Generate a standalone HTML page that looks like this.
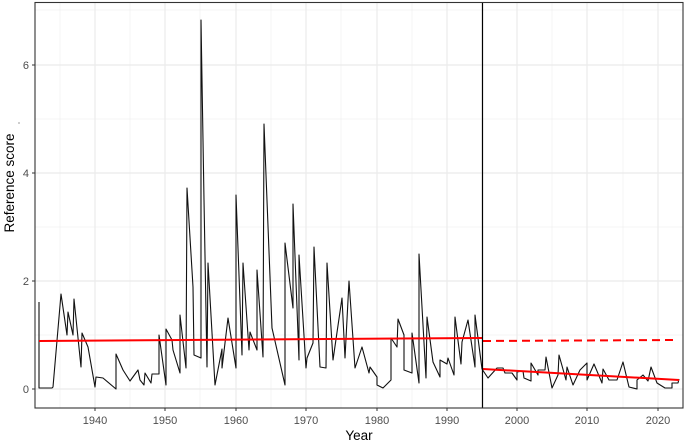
<!DOCTYPE html>
<html><head><meta charset="utf-8"><style>
html,body{margin:0;padding:0;background:#fff;}
svg{display:block;font-family:"Liberation Sans",sans-serif;}
</style></head><body>
<svg width="685" height="443" viewBox="0 0 685 443">
<rect width="685" height="443" fill="#fff"/>
<g stroke="#f0f0f0" stroke-width="0.7">
<line x1="35" x2="683" y1="335" y2="335"/><line x1="35" x2="683" y1="227" y2="227"/><line x1="35" x2="683" y1="119" y2="119"/><line x1="35" x2="683" y1="10" y2="10"/>
<line y1="3" y2="408" x1="60" x2="60"/><line y1="3" y2="408" x1="130" x2="130"/><line y1="3" y2="408" x1="200" x2="200"/><line y1="3" y2="408" x1="271" x2="271"/><line y1="3" y2="408" x1="341" x2="341"/><line y1="3" y2="408" x1="412" x2="412"/><line y1="3" y2="408" x1="482" x2="482"/><line y1="3" y2="408" x1="552" x2="552"/><line y1="3" y2="408" x1="623" x2="623"/>
</g>
<g stroke="#ebebeb" stroke-width="1.2">
<line x1="35" x2="683" y1="389" y2="389"/><line x1="35" x2="683" y1="281" y2="281"/><line x1="35" x2="683" y1="173" y2="173"/><line x1="35" x2="683" y1="65" y2="65"/>
<line y1="3" y2="408" x1="95" x2="95"/><line y1="3" y2="408" x1="165" x2="165"/><line y1="3" y2="408" x1="236" x2="236"/><line y1="3" y2="408" x1="306" x2="306"/><line y1="3" y2="408" x1="377" x2="377"/><line y1="3" y2="408" x1="447" x2="447"/><line y1="3" y2="408" x1="517" x2="517"/><line y1="3" y2="408" x1="587" x2="587"/><line y1="3" y2="408" x1="658" x2="658"/>
</g>
<polyline fill="none" stroke="#111" stroke-width="1.1" stroke-linejoin="round" points="39,302 39,388 52,388 53,387 61,294 67,335 68,312 73,335 74,299 81,367 82,333 88,347 95,387 96,377 103,378 116,389 116,354 123,370 130,381 138,370 140,380 144,385 145,373 151,383 152,374 159,374 159,335 166,385 166,329 172,340 173,350 180,373 180,315 186,368 187,188 193,287 194,355 201,358 201,20 204,200 207,367 208,263 215,385 222,349 222,368 228,318 236,368 236,195 242,355 243,263 249,350 250,332 257,350 257,270 263,357 264,124 272,328 285,385 285,243 293,308 293,204 299,360 299,255 306,368 307,358 313,343 314,247 320,367 326,368 327,263 333,360 342,298 345,358 349,281 355,368 362,347 369,373 370,367 377,377 377,385 383,388 391,380 391,338 397,347 398,319 404,335 404,370 412,373 412,333 419,383 419,254 426,378 427,317 433,362 440,377 440,360 447,364 448,358 454,375 455,317 461,364 462,342 468,320 475,367 475,315 482,369 488,378 497,368 503,368 505,373 512,373 517,380 517,372 523,371 524,378 531,381 531,363 538,375 538,370 545,370 546,357 552,388 558,375 559,355 566,380 567,367 573,385 580,370 587,363 587,380 594,364 602,383 603,369 609,380 617,380 623,362 629,387 637,389 637,380 643,375 648,381 651,367 657,383 665,388 672,388 672,383 678,383 679,379"/>
<line x1="39" y1="341" x2="482" y2="338" stroke="#f00" stroke-width="2"/>
<line x1="483" y1="341" x2="673" y2="340" stroke="#f00" stroke-width="2" stroke-dasharray="8,5"/>
<line x1="483" y1="369" x2="679" y2="380" stroke="#f00" stroke-width="2"/>
<line x1="482.5" y1="3" x2="482.5" y2="408" stroke="#000" stroke-width="1.2"/>
<rect x="35" y="2.5" width="648" height="405.5" fill="none" stroke="#333" stroke-width="1.1"/>
<g stroke="#333" stroke-width="1">
<line x1="32" x2="35" y1="389" y2="389"/><line x1="32" x2="35" y1="281" y2="281"/><line x1="32" x2="35" y1="173" y2="173"/><line x1="32" x2="35" y1="65" y2="65"/>
<line y1="408" y2="411" x1="95" x2="95"/><line y1="408" y2="411" x1="165" x2="165"/><line y1="408" y2="411" x1="236" x2="236"/><line y1="408" y2="411" x1="306" x2="306"/><line y1="408" y2="411" x1="377" x2="377"/><line y1="408" y2="411" x1="447" x2="447"/><line y1="408" y2="411" x1="517" x2="517"/><line y1="408" y2="411" x1="587" x2="587"/><line y1="408" y2="411" x1="658" x2="658"/>
</g>
<g fill="#4d4d4d" font-size="11" text-anchor="end">
<text x="29" y="393">0</text><text x="29" y="285">2</text><text x="29" y="177">4</text><text x="29" y="69">6</text>
</g>
<g fill="#4d4d4d" font-size="11" text-anchor="middle">
<text x="95" y="424">1940</text><text x="165" y="424">1950</text><text x="236" y="424">1960</text><text x="306" y="424">1970</text><text x="377" y="424">1980</text><text x="447" y="424">1990</text><text x="517" y="424">2000</text><text x="587" y="424">2010</text><text x="658" y="424">2020</text>
</g>
<text x="359" y="440" font-size="13.5" fill="#000" text-anchor="middle">Year</text>
<text transform="translate(14,183) rotate(-90)" font-size="13.5" fill="#000" text-anchor="middle">Reference score</text>
<circle cx="19" cy="123" r="0.6" fill="#555"/>
</svg>
</body></html>
